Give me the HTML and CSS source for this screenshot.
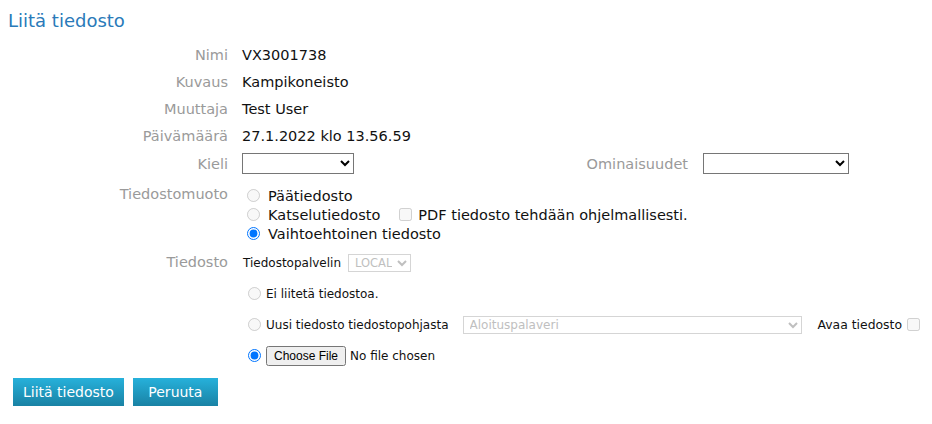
FILE: index.html
```html
<!doctype html>
<html lang="fi">
<head>
  <meta charset="UTF-8">
  <meta name="viewport" content="width=device-width, initial-scale=1.0">
  <title>Liitä tiedosto</title>
  <link rel="stylesheet" href="styles.css">
</head>
<body>
  <form class="page" method="POST" action="#" enctype="multipart/form-data">
    <h2 class="title">Liitä tiedosto</h2>

    <div class="row info">
      <span class="label">Nimi</span>
      <span class="value">VX3001738</span>
    </div>
    <div class="row info">
      <span class="label">Kuvaus</span>
      <span class="value">Kampikoneisto</span>
    </div>
    <div class="row info">
      <span class="label">Muuttaja</span>
      <span class="value">Test User</span>
    </div>
    <div class="row info">
      <span class="label">Päivämäärä</span>
      <span class="value">27.1.2022 klo 13.56.59</span>
    </div>

    <div class="row select-row">
      <label class="label" for="kieli">Kieli</label>
      <div class="inline">
        <select id="kieli" class="sel sel-kieli"><option></option></select>
        <label class="label pair-label" for="ominaisuudet">Ominaisuudet</label>
        <select id="ominaisuudet" class="sel sel-omin"><option></option></select>
      </div>
    </div>

    <div class="row format-row">
      <span class="label">Tiedostomuoto</span>
      <div class="options">
        <label class="opt"><input type="radio" name="format" disabled>Päätiedosto</label>
        <div class="opt">
          <label class="opt"><input type="radio" name="format" disabled>Katselutiedosto</label>
          <label class="opt pdf"><input type="checkbox" disabled>PDF tiedosto tehdään ohjelmallisesti.</label>
        </div>
        <label class="opt"><input type="radio" name="format" checked>Vaihtoehtoinen tiedosto</label>
      </div>
    </div>

    <div class="row file-row">
      <span class="label">Tiedosto</span>
      <div class="file-opts">
        <div class="sub server">
          <span>Tiedostopalvelin</span>
          <select class="sel sel-server" disabled><option>LOCAL</option></select>
        </div>
        <label class="sub"><input type="radio" name="source" disabled>Ei liitetä tiedostoa.</label>
        <div class="sub">
          <label class="sub-label"><input type="radio" name="source" disabled>Uusi tiedosto tiedostopohjasta</label>
          <select class="sel sel-template" disabled><option>Aloituspalaveri</option></select>
          <label class="open">Avaa tiedosto <input type="checkbox" disabled></label>
        </div>
        <div class="sub">
          <input type="radio" name="source" checked>
          <input type="file" class="file" name="upload">
        </div>
      </div>
    </div>

    <div class="actions">
      <button type="submit" class="btn btn-main">Liitä tiedosto</button>
      <button type="button" class="btn">Peruuta</button>
    </div>
  </form>
</body>
</html>
```

FILE: styles.css
```css
body {
  margin: 0;
  padding: 0;
  background: #fff;
  font-family: 'DejaVu Sans', Verdana, sans-serif;
  font-size: 14.5px;
  color: #111;
}

.page {
  padding: 0 8px;
}

.title {
  margin: 0;
  padding-top: 10px;
  height: 22px;
  line-height: 22px;
  font-size: 18px;
  font-weight: normal;
  color: #2a7ab9;
  margin-bottom: 9px;
}

.row {
  display: grid;
  grid-template-columns: 220px 1fr;
  column-gap: 14px;
  align-items: center;
}

.label {
  text-align: right;
  color: #9a9a9a;
}

.info {
  height: 27px;
}

.select-row {
  padding: 4px 0;
}

.inline {
  display: flex;
  align-items: center;
}

.sel {
  border: 1px solid #767676;
  border-radius: 0;
  background: #fff;
  font-family: 'DejaVu Sans', Verdana, sans-serif;
  font-size: 12px;
  padding: 0 2px;
  margin: 0;
}

.sel:disabled {
  border-color: #c4c4c4;
  color: #a5a5a5;
}

.sel-kieli {
  width: 112px;
  height: 21px;
}

.pair-label {
  width: 334px;
  margin-right: 15px;
}

.sel-omin {
  width: 146px;
  height: 21px;
}

.format-row {
  align-items: start;
  margin-top: 8px;
}

.format-row .label {
  line-height: 16px;
}

.options {
  display: flex;
  flex-direction: column;
}

.opt {
  display: flex;
  align-items: center;
  height: 19px;
}

.opt input[type="radio"] {
  margin: 0 8px 0 5px;
}

.pdf {
  margin-left: 15px;
}

.pdf input {
  margin: 0 6px 0 4px;
}

.file-row {
  align-items: start;
  margin-top: 10px;
}

.file-row .label {
  line-height: 19px;
}

.file-opts {
  display: flex;
  flex-direction: column;
  font-size: 12px;
}

.sub {
  display: flex;
  align-items: center;
  height: 31px;
}

.sub.server {
  height: 19px;
  margin-bottom: 6px;
  padding-left: 1px;
}

.sub input[type="radio"] {
  margin: 0 5px 0 6px;
}

.sub-label {
  display: flex;
  align-items: center;
}

.sel-server {
  width: 63px;
  height: 18px;
  margin-left: 7px;
  font-size: 11.5px;
}

.sel-template {
  width: 339px;
  height: 18px;
  margin-left: 14px;
}

.open {
  display: flex;
  align-items: center;
  margin-left: 16px;
  font-size: 12.4px;
}

.open input {
  margin: 0 0 0 5px;
}

.file {
  font-family: 'DejaVu Sans', Verdana, sans-serif;
  font-size: 12px;
}

.actions {
  display: flex;
  gap: 9px;
  margin-top: 7px;
  padding-left: 5px;
}

.btn {
  height: 28px;
  min-width: 85px;
  padding: 0 10px;
  border: none;
  background: linear-gradient(#26b1db, #1a82a4);
  color: #fff;
  font-family: 'DejaVu Sans', Verdana, sans-serif;
  font-size: 14px;
  cursor: pointer;
}
```
